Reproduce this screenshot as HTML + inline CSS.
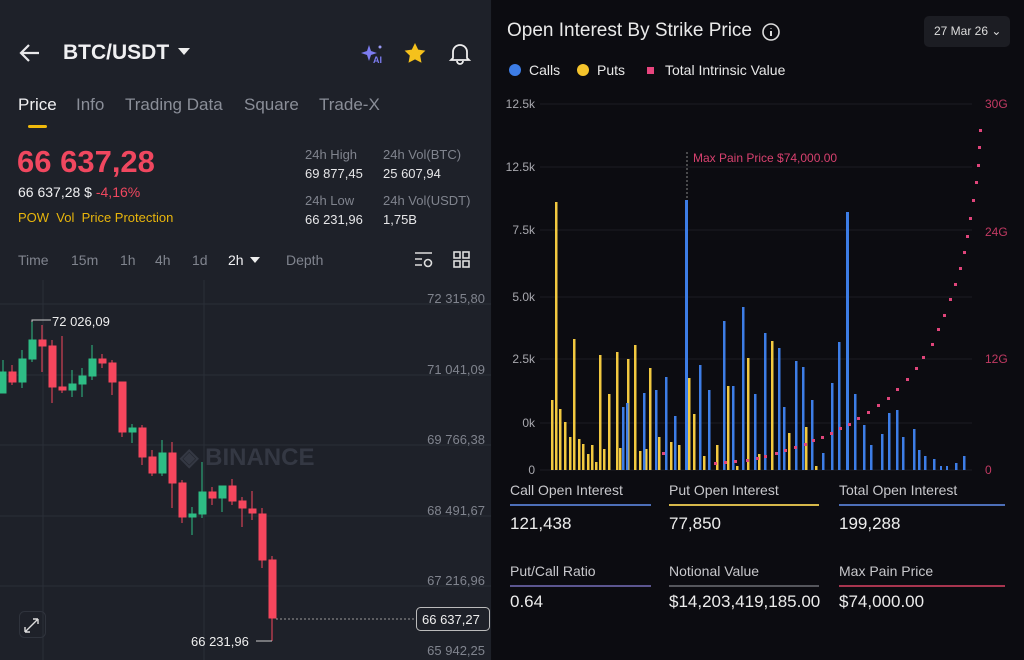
<!DOCTYPE html>
<html><head><meta charset="utf-8"><style>
*{margin:0;padding:0;box-sizing:border-box}
body{width:1024px;height:660px;overflow:hidden;background:#0d0d12;font-family:"Liberation Sans",sans-serif;position:relative}
.l{position:absolute;left:0;top:0;width:491px;height:660px;background:#1e2129}
.t{position:absolute;white-space:nowrap}
.r{position:absolute;left:492px;top:0;width:532px;height:660px;background:#0c0c11}
</style></head><body>
<div class="l">
<svg class="t" style="left:18px;top:42px" width="24" height="22" viewBox="0 0 24 22"><path d="M21 11H4M11 3 3 11l8 8" stroke="#e8e8ea" stroke-width="2.2" fill="none"/></svg>
<div class="t" style="left:63px;top:41px;font-size:21px;font-weight:bold;color:#f0f0f2">BTC/USDT</div>
<svg class="t" style="left:178px;top:48px" width="12" height="8"><path d="M0 0h12L6 7z" fill="#eee"/></svg>
<svg class="t" style="left:360px;top:42px" width="26" height="22"><path d="M9 3 11 9 17 11 11 13 9 19 7 13 1 11 7 9z" fill="#7c7cf0"/><text x="13" y="21" font-size="9" font-weight="bold" fill="#7c7cf0" font-family="Liberation Sans">AI</text><circle cx="20" cy="5" r="1.5" fill="#9a9af5"/></svg>
<svg class="t" style="left:403px;top:42px" width="24" height="22" viewBox="0 0 24 22"><path d="M12 1l3.2 6.6 7.2 1-5.2 5 1.3 7.2L12 17.4l-6.5 3.4 1.3-7.2-5.2-5 7.2-1z" fill="#f5c11c"/></svg>
<svg class="t" style="left:448px;top:41px" width="24" height="24" viewBox="0 0 24 24"><path d="M5 17V11a7 7 0 0 1 14 0v6l2 2H3z M9 20a3 3 0 0 0 6 0" stroke="#eee" stroke-width="1.8" fill="none"/></svg>
<div class="t" style="left:18px;top:95px;font-size:17px;color:#f0f0f2">Price</div>
<div class="t" style="left:76px;top:95px;font-size:17px;color:#8a8e98">Info</div>
<div class="t" style="left:125px;top:95px;font-size:17px;color:#8a8e98">Trading Data</div>
<div class="t" style="left:244px;top:95px;font-size:17px;color:#8a8e98">Square</div>
<div class="t" style="left:319px;top:95px;font-size:17px;color:#8a8e98">Trade-X</div>
<div class="t" style="left:28px;top:125px;width:19px;height:3px;background:#f0b90b;border-radius:2px"></div>
<div class="t" style="left:17px;top:144px;font-size:31px;font-weight:bold;color:#f0475f">66 637,28</div>
<div class="t" style="left:18px;top:184px;font-size:14px;color:#f0f0f2">66 637,28 $ <span style="color:#f0475f">-4,16%</span></div>
<div class="t" style="left:18px;top:210px;font-size:13px;color:#e8b50c">POW &nbsp;Vol &nbsp;Price Protection</div>
<div class="t" style="left:305px;top:145px;font-size:13px;color:#80848e;line-height:19px">24h High<br><span style="color:#e6e6e8">69 877,45</span></div>
<div class="t" style="left:383px;top:145px;font-size:13px;color:#80848e;line-height:19px">24h Vol(BTC)<br><span style="color:#e6e6e8">25 607,94</span></div>
<div class="t" style="left:305px;top:191px;font-size:13px;color:#80848e;line-height:19px">24h Low<br><span style="color:#e6e6e8">66 231,96</span></div>
<div class="t" style="left:383px;top:191px;font-size:13px;color:#80848e;line-height:19px">24h Vol(USDT)<br><span style="color:#e6e6e8">1,75B</span></div>
<div class="t" style="left:18px;top:252px;font-size:14px;color:#80848e;word-spacing:0">Time</div>
<div class="t" style="left:71px;top:252px;font-size:14px;color:#80848e">15m</div>
<div class="t" style="left:120px;top:252px;font-size:14px;color:#80848e">1h</div>
<div class="t" style="left:155px;top:252px;font-size:14px;color:#80848e">4h</div>
<div class="t" style="left:192px;top:252px;font-size:14px;color:#80848e">1d</div>
<div class="t" style="left:228px;top:252px;font-size:14px;color:#f0f0f2">2h</div>
<svg class="t" style="left:250px;top:257px" width="10" height="6"><path d="M0 0h10L5 6z" fill="#eee"/></svg>
<div class="t" style="left:286px;top:252px;font-size:14px;color:#80848e">Depth</div>
<svg class="t" style="left:413px;top:250px" width="22" height="20"><path d="M2 3h17M2 9h7M2 15h7" stroke="#ddd" stroke-width="1.6"/><circle cx="15" cy="13" r="3.5" stroke="#ddd" stroke-width="1.6" fill="none"/></svg>
<svg class="t" style="left:453px;top:251px" width="18" height="18"><g stroke="#ddd" stroke-width="1.6" fill="none"><rect x="1" y="1" width="6" height="6"/><rect x="10" y="1" width="6" height="6"/><rect x="1" y="10" width="6" height="6"/><rect x="10" y="10" width="6" height="6"/></g></svg>
<svg class="t" style="left:0;top:280px" width="491" height="380">
<g stroke="#2a2e37" stroke-width="1"><line x1="0" y1="24" x2="491" y2="24"/><line x1="0" y1="95" x2="491" y2="95"/><line x1="0" y1="165" x2="491" y2="165"/><line x1="0" y1="236" x2="491" y2="236"/><line x1="0" y1="306" x2="491" y2="306"/><line x1="43" y1="0" x2="43" y2="380"/><line x1="204" y1="0" x2="204" y2="380"/></g>
<text x="180" y="185" font-size="24" font-weight="bold" fill="#343843" font-family="Liberation Sans">◈ BINANCE</text>
<g font-family="Liberation Sans" font-size="13" fill="#80848e" text-anchor="end"><text x="485" y="23">72 315,80</text><text x="485" y="94">71 041,09</text><text x="485" y="164">69 766,38</text><text x="485" y="235">68 491,67</text><text x="485" y="305">67 216,96</text><text x="485" y="375">65 942,25</text></g>
<g transform="translate(0,-280)">
<g stroke-width="1">
<g fill="#2ebd85" stroke="#2ebd85"><line x1="3" y1="360" x2="3" y2="393"/><rect x="-1" y="372" width="7" height="21"/>
<line x1="22" y1="350" x2="22" y2="388"/><rect x="19" y="359" width="7" height="23"/>
<line x1="32" y1="322" x2="32" y2="362"/><rect x="29" y="340" width="7" height="19"/>
<line x1="72" y1="370" x2="72" y2="397"/><rect x="69" y="384" width="7" height="6"/>
<line x1="82" y1="368" x2="82" y2="397"/><rect x="79" y="376" width="7" height="8"/>
<line x1="92" y1="345" x2="92" y2="380"/><rect x="89" y="359" width="7" height="17"/>
<line x1="132" y1="424" x2="132" y2="443"/><rect x="129" y="428" width="7" height="4"/>
<line x1="162" y1="440" x2="162" y2="476"/><rect x="159" y="453" width="7" height="20"/>
<line x1="192" y1="507" x2="192" y2="535"/><rect x="189" y="514" width="7" height="3"/>
<line x1="202" y1="462" x2="202" y2="518"/><rect x="199" y="492" width="7" height="22"/>
<line x1="222" y1="486" x2="222" y2="512"/><rect x="219" y="486" width="7" height="12"/></g>
<g fill="#f6465d" stroke="#f6465d"><line x1="12" y1="365" x2="12" y2="385"/><rect x="9" y="372" width="7" height="10"/>
<line x1="42" y1="325" x2="42" y2="372"/><rect x="39" y="340" width="7" height="6"/>
<line x1="52" y1="340" x2="52" y2="403"/><rect x="49" y="346" width="7" height="41"/>
<line x1="62" y1="336" x2="62" y2="393"/><rect x="59" y="387" width="7" height="3"/>
<line x1="102" y1="354" x2="102" y2="368"/><rect x="99" y="359" width="7" height="4"/>
<line x1="112" y1="360" x2="112" y2="395"/><rect x="109" y="363" width="7" height="19"/>
<line x1="122" y1="382" x2="122" y2="437"/><rect x="119" y="382" width="7" height="50"/>
<line x1="142" y1="425" x2="142" y2="465"/><rect x="139" y="428" width="7" height="29"/>
<line x1="152" y1="450" x2="152" y2="476"/><rect x="149" y="457" width="7" height="16"/>
<line x1="172" y1="442" x2="172" y2="508"/><rect x="169" y="453" width="7" height="30"/>
<line x1="182" y1="480" x2="182" y2="523"/><rect x="179" y="483" width="7" height="34"/>
<line x1="212" y1="487" x2="212" y2="505"/><rect x="209" y="492" width="7" height="6"/>
<line x1="232" y1="479" x2="232" y2="505"/><rect x="229" y="486" width="7" height="15"/>
<line x1="242" y1="497" x2="242" y2="527"/><rect x="239" y="501" width="7" height="7"/>
<line x1="252" y1="491" x2="252" y2="520"/><rect x="249" y="509" width="7" height="4"/>
<line x1="262" y1="508" x2="262" y2="568"/><rect x="259" y="514" width="7" height="46"/>
<line x1="272" y1="556" x2="272" y2="641"/><rect x="269" y="560" width="7" height="58"/></g>
</g>
<path d="M32 322V320H51" stroke="#ccc" fill="none"/><text x="52" y="326" font-size="13" fill="#eee" font-family="Liberation Sans">72 026,09</text>
<path d="M272 641H256" stroke="#ccc" fill="none"/><text x="191" y="646" font-size="13" fill="#eee" font-family="Liberation Sans">66 231,96</text>
<line x1="276" y1="619" x2="416" y2="619" stroke="#999" stroke-dasharray="2 2"/>
<rect x="416.5" y="607.5" width="73" height="23" rx="4" fill="#1e2129" stroke="#bbb"/><text x="422" y="624" font-size="13" fill="#eee" font-family="Liberation Sans">66 637,27</text>
<rect x="19.5" y="611.5" width="26" height="26" rx="5" fill="none" stroke="#2f333c"/>
<path d="M25 632l13-13M25 632v-5M25 632h5M38 619h-5M38 619v5" stroke="#ddd" stroke-width="1.4" fill="none"/>
</g></svg>
</div>
<div class="r"></div>
<div class="t" style="left:507px;top:20px;font-size:19px;color:#eaeaea">Open Interest By Strike Price</div>
<svg class="t" style="left:761px;top:22px" width="20" height="20"><circle cx="10" cy="10" r="8" stroke="#ddd" stroke-width="1.6" fill="none"/><path d="M10 9v5M10 6v0.5" stroke="#ddd" stroke-width="2"/></svg>
<div class="t" style="left:924px;top:16px;width:86px;height:31px;background:#1c1d23;border-radius:5px;font-size:12px;color:#ddd;padding:8px 0 0 10px">27 Mar 26 ⌄</div>
<div class="t" style="left:509px;top:64px;width:12px;height:12px;border-radius:6px;background:#3d7de6"></div>
<div class="t" style="left:529px;top:62px;font-size:14px;color:#e8e8e8">Calls</div>
<div class="t" style="left:577px;top:64px;width:12px;height:12px;border-radius:6px;background:#f5c42c"></div>
<div class="t" style="left:597px;top:62px;font-size:14px;color:#e8e8e8">Puts</div>
<div class="t" style="left:647px;top:67px;width:7px;height:7px;background:#e8457e"></div>
<div class="t" style="left:665px;top:62px;font-size:14px;color:#e8e8e8">Total Intrinsic Value</div>
<svg class="t" style="left:492px;top:90px" width="532" height="390">
<g transform="translate(-492,-90)">
<g stroke="#1c1d24"><line x1="540" y1="104" x2="972" y2="104"/><line x1="540" y1="167" x2="972" y2="167"/><line x1="540" y1="230" x2="972" y2="230"/><line x1="540" y1="297" x2="972" y2="297"/><line x1="540" y1="359" x2="972" y2="359"/><line x1="540" y1="423" x2="972" y2="423"/><line x1="540" y1="470" x2="972" y2="470"/></g>
<g font-family="Liberation Sans" font-size="12" fill="#a8a8ae" text-anchor="end"><text x="535" y="108">12.5k</text><text x="535" y="171">12.5k</text><text x="535" y="234">7.5k</text><text x="535" y="301">5.0k</text><text x="535" y="363">2.5k</text><text x="535" y="427">0k</text><text x="535" y="474">0</text></g>
<g font-family="Liberation Sans" font-size="12" fill="#c23a63"><text x="985" y="108">30G</text><text x="985" y="236">24G</text><text x="985" y="363">12G</text><text x="985" y="474">0</text></g>
<line x1="687" y1="152" x2="687" y2="200" stroke="#888" stroke-dasharray="2 2"/>
<text x="693" y="162" font-family="Liberation Sans" font-size="12" fill="#d8416f">Max Pain Price $74,000.00</text>
<g fill="#f2c940">
<rect x="551" y="400" width="2.5" height="70"/><rect x="555" y="202" width="2.5" height="268"/><rect x="559" y="409" width="2.5" height="61"/><rect x="564" y="422" width="2.5" height="48"/><rect x="569" y="437" width="2.5" height="33"/><rect x="573" y="339" width="2.5" height="131"/><rect x="578" y="439" width="2.5" height="31"/><rect x="582" y="444" width="2.5" height="26"/><rect x="587" y="454" width="2.5" height="16"/><rect x="591" y="445" width="2.5" height="25"/><rect x="595" y="462" width="2.5" height="8"/><rect x="599" y="355" width="2.5" height="115"/><rect x="603" y="449" width="2.5" height="21"/><rect x="608" y="394" width="2.5" height="76"/><rect x="616" y="352" width="2.5" height="118"/><rect x="619" y="448" width="2.5" height="22"/><rect x="627" y="359" width="2.5" height="111"/><rect x="634" y="345" width="2.5" height="125"/><rect x="639" y="451" width="2.5" height="19"/><rect x="645" y="449" width="2.5" height="21"/><rect x="649" y="368" width="2.5" height="102"/><rect x="658" y="437" width="2.5" height="33"/><rect x="670" y="442" width="2.5" height="28"/><rect x="678" y="445" width="2.5" height="25"/><rect x="688" y="378" width="2.5" height="92"/><rect x="693" y="414" width="2.5" height="56"/><rect x="703" y="456" width="2.5" height="14"/><rect x="716" y="445" width="2.5" height="25"/><rect x="727" y="386" width="2.5" height="84"/><rect x="736" y="466" width="2.5" height="4"/><rect x="747" y="358" width="2.5" height="112"/><rect x="758" y="454" width="2.5" height="16"/><rect x="771" y="341" width="2.5" height="129"/><rect x="788" y="433" width="2.5" height="37"/><rect x="805" y="427" width="2.5" height="43"/><rect x="815" y="466" width="2.5" height="4"/>
</g>
<g fill="#3d7de6">
<rect x="622" y="407" width="2.5" height="63"/><rect x="626" y="403" width="2.5" height="67"/><rect x="643" y="393" width="2.5" height="77"/><rect x="655" y="390" width="2.5" height="80"/><rect x="665" y="377" width="2.5" height="93"/><rect x="674" y="416" width="2.5" height="54"/><rect x="685" y="200" width="3" height="270"/><rect x="699" y="365" width="2.5" height="105"/><rect x="708" y="390" width="2.5" height="80"/><rect x="723" y="321" width="2.5" height="149"/><rect x="732" y="386" width="2.5" height="84"/><rect x="742" y="307" width="2.5" height="163"/><rect x="754" y="394" width="2.5" height="76"/><rect x="764" y="333" width="2.5" height="137"/><rect x="778" y="348" width="2.5" height="122"/><rect x="783" y="407" width="2.5" height="63"/><rect x="795" y="361" width="2.5" height="109"/><rect x="802" y="367" width="2.5" height="103"/><rect x="811" y="400" width="2.5" height="70"/><rect x="822" y="453" width="2.5" height="17"/><rect x="831" y="383" width="2.5" height="87"/><rect x="838" y="342" width="2.5" height="128"/><rect x="846" y="212" width="3" height="258"/><rect x="854" y="394" width="2.5" height="76"/><rect x="863" y="425" width="2.5" height="45"/><rect x="870" y="445" width="2.5" height="25"/><rect x="881" y="434" width="2.5" height="36"/><rect x="888" y="413" width="2.5" height="57"/><rect x="896" y="410" width="2.5" height="60"/><rect x="902" y="437" width="2.5" height="33"/><rect x="913" y="429" width="2.5" height="41"/><rect x="918" y="450" width="2.5" height="20"/><rect x="924" y="456" width="2.5" height="14"/><rect x="933" y="459" width="2.5" height="11"/><rect x="955" y="463" width="2.5" height="7"/><rect x="963" y="456" width="2.5" height="14"/><rect x="940" y="466" width="2" height="4"/><rect x="946" y="466" width="2" height="4"/>
</g>
<g fill="#e0457b">
<rect x="662" y="452" width="3" height="3"/><rect x="714" y="462" width="3" height="3"/><rect x="724" y="461" width="3" height="3"/><rect x="734" y="460" width="3" height="3"/><rect x="746" y="459" width="3" height="3"/><rect x="756" y="457" width="3" height="3"/><rect x="764" y="455" width="3" height="3"/><rect x="775" y="452" width="3" height="3"/><rect x="784" y="449" width="3" height="3"/><rect x="794" y="446" width="3" height="3"/><rect x="804" y="443" width="3" height="3"/><rect x="812" y="439" width="3" height="3"/><rect x="821" y="436" width="3" height="3"/><rect x="830" y="432" width="3" height="3"/><rect x="839" y="427" width="3" height="3"/><rect x="848" y="423" width="3" height="3"/><rect x="857" y="417" width="3" height="3"/><rect x="867" y="411" width="3" height="3"/><rect x="877" y="404" width="3" height="3"/><rect x="887" y="397" width="3" height="3"/><rect x="896" y="388" width="3" height="3"/><rect x="906" y="378" width="3" height="3"/><rect x="915" y="367" width="3" height="3"/><rect x="922" y="356" width="3" height="3"/><rect x="931" y="343" width="3" height="3"/><rect x="937" y="328" width="3" height="3"/><rect x="943" y="314" width="3" height="3"/><rect x="949" y="298" width="3" height="3"/><rect x="954" y="283" width="3" height="3"/><rect x="959" y="267" width="3" height="3"/><rect x="963" y="251" width="3" height="3"/><rect x="966" y="235" width="3" height="3"/><rect x="969" y="217" width="3" height="3"/><rect x="972" y="199" width="3" height="3"/><rect x="975" y="181" width="3" height="3"/><rect x="977" y="164" width="3" height="3"/><rect x="978" y="146" width="3" height="3"/><rect x="979" y="129" width="3" height="3"/>
</g>
</g></svg>
<div class="t" style="left:510px;top:482px;font-size:14px;color:#c8c8cc">Call Open Interest</div>
<div class="t" style="left:510px;top:504px;width:141px;height:2px;background:#4d6fb8"></div>
<div class="t" style="left:510px;top:514px;font-size:17px;color:#ececec">121,438</div>
<div class="t" style="left:669px;top:482px;font-size:14px;color:#c8c8cc">Put Open Interest</div>
<div class="t" style="left:669px;top:504px;width:150px;height:2px;background:#d6b84a"></div>
<div class="t" style="left:669px;top:514px;font-size:17px;color:#ececec">77,850</div>
<div class="t" style="left:839px;top:482px;font-size:14px;color:#c8c8cc">Total Open Interest</div>
<div class="t" style="left:839px;top:504px;width:166px;height:2px;background:#4d6fb8"></div>
<div class="t" style="left:839px;top:514px;font-size:17px;color:#ececec">199,288</div>
<div class="t" style="left:510px;top:563px;font-size:14px;color:#c8c8cc">Put/Call Ratio</div>
<div class="t" style="left:510px;top:585px;width:141px;height:2px;background:#5c5690"></div>
<div class="t" style="left:510px;top:592px;font-size:17px;color:#ececec">0.64</div>
<div class="t" style="left:669px;top:563px;font-size:14px;color:#c8c8cc">Notional Value</div>
<div class="t" style="left:669px;top:585px;width:150px;height:2px;background:#55565c"></div>
<div class="t" style="left:669px;top:592px;font-size:17px;color:#ececec">$14,203,419,185.00</div>
<div class="t" style="left:839px;top:563px;font-size:14px;color:#c8c8cc">Max Pain Price</div>
<div class="t" style="left:839px;top:585px;width:166px;height:2px;background:#a8354f"></div>
<div class="t" style="left:839px;top:592px;font-size:17px;color:#ececec">$74,000.00</div>
</body></html>
